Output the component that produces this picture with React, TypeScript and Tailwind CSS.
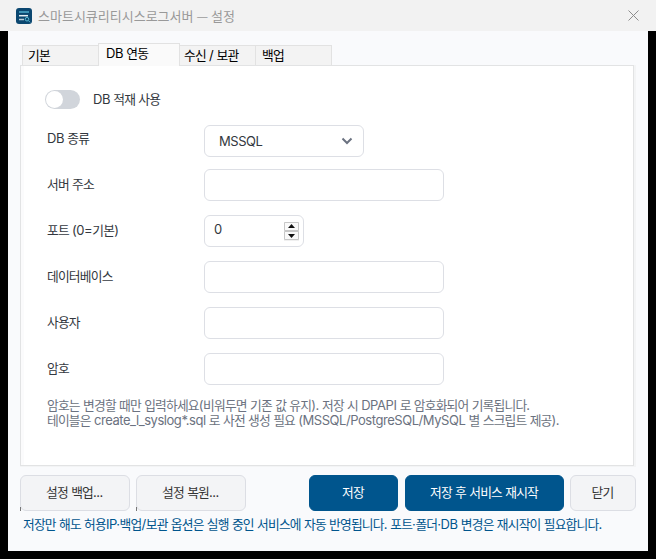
import React from 'react';

const HANGUL = /([\uac00-\ud7a3]+)/;

function T({ children, className = '' }: { children: string; className?: string }) {
  return (
    <span className={`tracking-[-0.45px] whitespace-pre ${className}`}>
      {children.split(HANGUL).map((part, i) =>
        HANGUL.test(part) ? (
          <span key={i} className="text-[12.75px] tracking-[-0.8px]">
            {part}
          </span>
        ) : (
          part
        ),
      )}
    </span>
  );
}

function Field({ label, children }: { label: string; children?: React.ReactNode }) {
  return (
    <div className="flex h-8">
      <label className="w-[157px] shrink-0 pt-[5px] leading-5">
        <T>{label}</T>
      </label>
      {children ?? <div className="h-8 w-[240px] rounded-md border border-[#dddfe5] bg-white" />}
    </div>
  );
}

function Button({
  label,
  primary,
  notch,
  className,
}: {
  label: string;
  primary?: boolean;
  notch?: boolean;
  className: string;
}) {
  return (
    <button
      className={`relative flex h-9 items-center justify-center rounded-md border pr-px ${
        primary ? 'border-[#00558d] bg-[#00558d] text-white' : 'border-[#dcdee4] bg-[#f3f4f6] text-[#333]'
      } ${className}`}
    >
      <T>{label}</T>
      {notch && <span className="absolute -bottom-px -left-px h-1 w-px bg-[#777]" />}
    </button>
  );
}

export default function App() {
  return (
    <div className="h-[559px] w-[656px] overflow-hidden bg-black font-['Inter','Noto_Sans_CJK_KR',sans-serif] text-[13px] font-[370] text-[#333840]">
      <header className="flex h-[31px] items-center bg-[#f2f2f2] pr-[17px] pl-4">
        <svg width="16" height="16" viewBox="0 0 16 16">
          <rect width="16" height="16" rx="3" fill="#0b4770" />
          <path d="M3 4h10" stroke="#4aa7c8" strokeWidth="1.6" />
          <path d="M3 7.7h9" stroke="#e7f1f5" strokeWidth="1.5" />
          <path d="M3 11.5h5" stroke="#b5cbd6" strokeWidth="1.5" />
          <circle cx="11" cy="11.2" r="1.8" fill="#0b4770" stroke="#58b7d1" strokeWidth="1" />
          <path d="m12.4 12.6 1.7 1.7" stroke="#58b7d1" strokeWidth="1" />
        </svg>
        <h1 className="ml-[6px] font-['Noto_Sans_CJK_KR',sans-serif] leading-5 font-normal whitespace-pre text-[#999]">
          스마트시큐리티시스로그서버 — 설정
        </h1>
        <svg className="ml-auto" width="11" height="11" viewBox="0 0 11 11" fill="none" stroke="#8d8d8d">
          <path d="m.5.5 10 10m0-10-10 10" />
        </svg>
      </header>

      <main className="mx-2 h-[520px] bg-[#f9fafc] pt-3 pl-3">
        <nav className="flex h-[22px] items-end pl-[2px] text-black">
          <div className="h-5 w-[76px] border border-r-0 border-b-0 border-[#e2e2e2] bg-[#f3f3f3] pl-[5px] leading-[18px]">
            <T>기본</T>
          </div>
          <div className="z-10 -mb-px h-[23px] w-[82px] border border-b-0 border-[#e2e2e2] bg-[#fafafa] pl-[7px] leading-[19px]">
            <T>DB 연동</T>
          </div>
          <div className="h-5 w-[76px] border border-b-0 border-l-0 border-[#e2e2e2] bg-[#f3f3f3] pl-1 leading-[18px]">
            <T>수신 / 보관</T>
          </div>
          <div className="h-5 w-[76px] border border-b-0 border-l-0 border-[#e2e2e2] bg-[#f3f3f3] pl-[6px] leading-[18px]">
            <T>백업</T>
          </div>
        </nav>

        <div className="w-[616px] border-r-2 border-b border-[#f3f4f5]">
          <section className="h-[401px] w-[614px] border border-[#e2e3e4] bg-[#fbfbfc] pl-[3px]">
            <div className="h-full bg-white pl-[22px]">
              <div className="-ml-px flex h-[59px] items-start pt-6">
                <div className="flex h-[19px] w-[35px] items-center rounded-full bg-[#d1d5db] pl-px">
                  <div className="size-[17px] rounded-full bg-white" />
                </div>
                <T className="ml-[13px] leading-[18px]">DB 적재 사용</T>
              </div>
              <div className="flex flex-col gap-[14px] pl-px">
                <div className="-mb-[2px] flex h-8">
                  <label className="w-[157px] shrink-0 pt-[3px] leading-5">
                    <T>DB 종류</T>
                  </label>
                  <div className="flex w-[160px] items-center justify-between rounded-md border border-[#dddfe5] bg-white pr-[10px] pl-[14px]">
                    <T className="pt-[2px]">MSSQL</T>
                    <svg width="12" height="8" viewBox="0 0 12 8" fill="none" stroke="#6b7280" strokeWidth="2">
                      <path d="m1.5 1.5 4.5 4.5 4.5-4.5" />
                    </svg>
                  </div>
                </div>
                <Field label="서버 주소" />
                <Field label="포트 (0=기본)">
                  <div className="flex h-8 w-[100px] justify-between rounded-md border border-[#dddfe5] bg-white pr-1 pl-[9px]">
                    <T className="pt-[3px] leading-5">0</T>
                    <svg className="mt-[6px]" width="15" height="19" viewBox="0 0 15 19">
                      <path d="M0 0h15v19H0z" fill="#f0f0f0" />
                      <path d="M.5.5h14v8H.5zM.5 9.5h14v8H.5z" fill="#fafafa" stroke="#c8c8c8" />
                      <path d="m4 6 3.5-4L11 6zM4 12l3.5 4 3.5-4z" fill="#111" />
                    </svg>
                  </div>
                </Field>
                <Field label="데이터베이스" />
                <Field label="사용자" />
                <Field label="암호" />
              </div>
              <p className="mt-[13px] pl-px leading-[15px] text-[#6b7280]">
                <T className="block">암호는 변경할 때만 입력하세요(비워두면 기존 값 유지). 저장 시 DPAPI 로 암호화되어 기록됩니다.</T>
                <T className="block">테이블은 create_l_syslog*.sql 로 사전 생성 필요 (MSSQL/PostgreSQL/MySQL 별 스크립트 제공).</T>
              </p>
            </div>
          </section>
        </div>

        <div className="mt-2 flex">
          <Button label="설정 백업..." notch className="w-[110px]" />
          <Button label="설정 복원..." notch className="ml-[6px] w-[110px]" />
          <Button label="저장" primary className="ml-[63px] w-[89px]" />
          <Button label="저장 후 서비스 재시작" primary className="ml-[7px] w-[159px]" />
          <Button label="닫기" className="ml-[6px] w-[66px]" />
        </div>
        <p className="mt-[3px] pl-[3px] leading-5 text-[#00558d]">
          <T>저장만 해도 허용IP·백업/보관 옵션은 실행 중인 서비스에 자동 반영됩니다. 포트·폴더·DB 변경은 재시작이 필요합니다.</T>
        </p>
      </main>
    </div>
  );
}
